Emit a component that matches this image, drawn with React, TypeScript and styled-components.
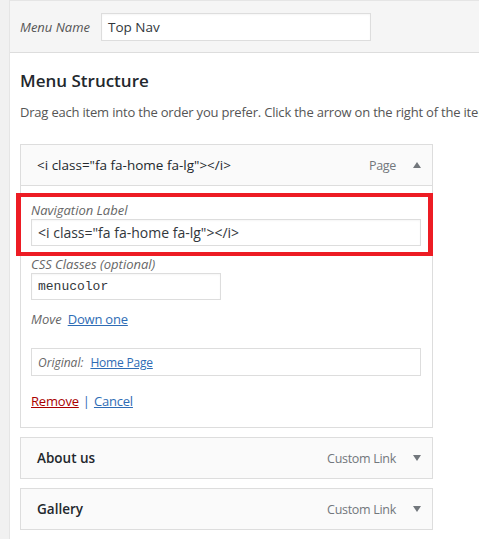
import React from "react";
import styled, { createGlobalStyle } from "styled-components";

const Global = createGlobalStyle`
  html, body { margin: 0; padding: 0; }
  body {
    background: #fff;
    font-family: "Open Sans", "Noto Sans", sans-serif;
    font-size: 13px;
    color: #444;
    overflow: hidden;
  }
`;

const Page = styled.div`
  display: flex;
  min-height: 539px;
`;

const Gutter = styled.div`
  width: 9px;
  flex: none;
  background: #f1f1f1;
`;

const Panel = styled.div`
  width: 469px;
  flex: none;
  overflow: hidden;
  border-left: 1px solid #e5e5e5;
  border-top: 1px solid #e5e5e5;
  background: #fff;
`;

const Header = styled.div`
  display: flex;
  align-items: center;
  gap: 11px;
  height: 51px;
  padding: 0 10px;
  background: #f5f5f5;
  border-bottom: 1px solid #dddddd;
`;

const HeaderLabel = styled.span`
  font-style: italic;
  font-size: 13px;
  color: #555;
`;

const TextInput = styled.div<{ $w?: number; $mono?: boolean }>`
  box-sizing: border-box;
  width: ${(p) => (p.$w ? `${p.$w}px` : "100%")};
  height: 27px;
  display: flex;
  align-items: center;
  padding: 0 6px;
  background: #fff;
  border: 1px solid #dddddd;
  box-shadow: inset 0 1px 2px rgba(0, 0, 0, 0.04);
  color: #32373c;
  font-family: ${(p) => (p.$mono ? `"Liberation Mono", "DejaVu Sans Mono", monospace` : "inherit")};
  font-size: ${(p) => (p.$mono ? "13px" : "14px")};
  white-space: nowrap;
`;

const NameInput = styled(TextInput)`
  height: 28px;
  font-size: 13.5px;
`;

const Body = styled.div`
  padding: 0 10px;
`;

const Heading = styled.h3`
  margin: 17px 0 0;
  font-size: 17px;
  font-weight: 600;
  line-height: 22px;
  color: #23282d;
`;

const Description = styled.p`
  margin: 11px 0 0;
  font-size: 13px;
  line-height: 18px;
  letter-spacing: -0.2px;
  color: #555;
  white-space: nowrap;
`;

const ItemList = styled.div`
  margin-top: 23px;
  width: 413px;
  display: flex;
  flex-direction: column;
  gap: 9px;
`;

const Item = styled.div``;

const Handle = styled.div<{ $bold?: boolean }>`
  box-sizing: border-box;
  height: 42px;
  display: flex;
  align-items: center;
  padding: 0 11px 0 16px;
  background: #fafafa;
  border: 1px solid #dddddd;
  color: #23282d;
  font-size: 13.5px;
  font-weight: ${(p) => (p.$bold ? 600 : 400)};
`;

const Title = styled.span`
  flex: 1;
`;

const ItemType = styled.span`
  color: #72777c;
  font-weight: 400;
  font-size: 12.5px;
  letter-spacing: -0.3px;
  margin-right: 17px;
`;

const Arrow = styled.svg`
  width: 8px;
  height: 6px;
  display: block;
`;

const Settings = styled.div`
  border: 1px solid #dddddd;
  border-top: none;
  padding: 15px 11px 17px 10px;
  display: flex;
  flex-direction: column;
`;

const Field = styled.div<{ $highlight?: boolean }>`
  position: relative;
  display: flex;
  flex-direction: column;
  & + & {
    margin-top: 9px;
  }
  ${(p) =>
    p.$highlight &&
    `
    &::after {
      content: "";
      position: absolute;
      top: -8px;
      bottom: -10px;
      left: -15px;
      right: -12px;
      border: solid #ed1c24;
      border-width: 4px 5px;
      pointer-events: none;
    }
  `}
`;

const FieldLabel = styled.label`
  font-style: italic;
  font-size: 13px;
  line-height: 18px;
  color: #666;
`;

const MoveRow = styled.div`
  margin-top: 10px;
  display: flex;
  gap: 6px;
  line-height: 18px;
  font-size: 13px;
`;

const MoveLabel = styled.span`
  font-style: italic;
  color: #666;
`;

const Link = styled.a<{ $danger?: boolean }>`
  color: ${(p) => (p.$danger ? "#a00" : "#2e6cb5")};
  text-decoration: underline;
  letter-spacing: -0.2px;
  cursor: pointer;
`;

const OriginalBox = styled.div`
  box-sizing: border-box;
  margin-top: 20px;
  height: 28px;
  border: 1px solid #dddddd;
  display: flex;
  align-items: center;
  gap: 7px;
  padding: 0 6px;
  font-size: 12px;
`;

const Actions = styled.div`
  margin-top: 16px;
  display: flex;
  gap: 4px;
  line-height: 18px;
  font-size: 13px;
  color: #2e6cb5;
`;

const Up = () => (
  <Arrow viewBox="0 0 8 6">
    <polygon points="4,0 8,6 0,6" fill="#72777c" />
  </Arrow>
);
const Down = () => (
  <Arrow viewBox="0 0 8 6">
    <polygon points="0,0 8,0 4,6" fill="#72777c" />
  </Arrow>
);

export default function App() {
  return (
    <>
      <Global />
      <Page>
        <Gutter />
        <Panel>
          <Header>
            <HeaderLabel>Menu Name</HeaderLabel>
            <NameInput $w={270}>Top Nav</NameInput>
          </Header>
          <Body>
            <Heading>Menu Structure</Heading>
            <Description>
              Drag each item into the order you prefer. Click the arrow on the right of the item to reveal additional configuration options.
            </Description>
            <ItemList>
              <Item>
                <Handle>
                  <Title>{'<i class="fa fa-home fa-lg"></i>'}</Title>
                  <ItemType>Page</ItemType>
                  <Up />
                </Handle>
                <Settings>
                  <Field $highlight>
                    <FieldLabel>Navigation Label</FieldLabel>
                    <TextInput>{'<i class="fa fa-home fa-lg"></i>'}</TextInput>
                  </Field>
                  <Field>
                    <FieldLabel>CSS Classes (optional)</FieldLabel>
                    <TextInput $w={190} $mono>menucolor</TextInput>
                  </Field>
                  <MoveRow>
                    <MoveLabel>Move</MoveLabel>
                    <Link>Down one</Link>
                  </MoveRow>
                  <OriginalBox>
                    <MoveLabel>Original:</MoveLabel>
                    <Link>Home Page</Link>
                  </OriginalBox>
                  <Actions>
                    <Link $danger>Remove</Link>
                    <span>|</span>
                    <Link>Cancel</Link>
                  </Actions>
                </Settings>
              </Item>
              <Item>
                <Handle $bold>
                  <Title>About us</Title>
                  <ItemType>Custom Link</ItemType>
                  <Down />
                </Handle>
              </Item>
              <Item>
                <Handle $bold>
                  <Title>Gallery</Title>
                  <ItemType>Custom Link</ItemType>
                  <Down />
                </Handle>
              </Item>
            </ItemList>
          </Body>
        </Panel>
      </Page>
    </>
  );
}
